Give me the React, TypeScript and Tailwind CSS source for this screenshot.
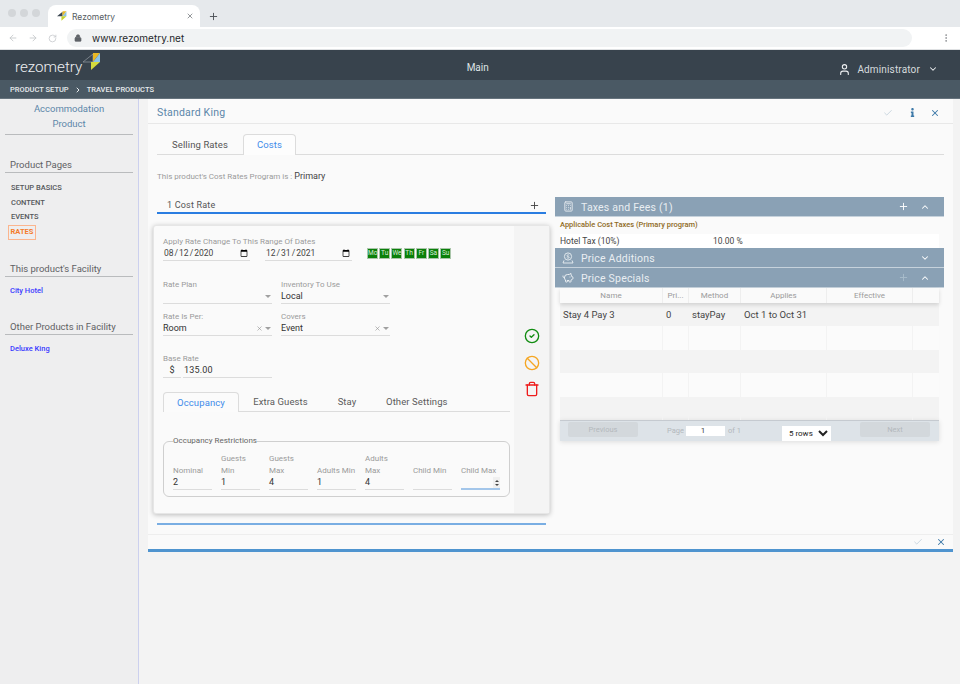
import React from "react";
import { ArrowLeft, ArrowRight, RotateCw, Lock, X, Plus, ChevronDown, ChevronUp, ChevronRight, Check, Calculator, PiggyBank, CircleCheck, Ban, Trash, User, MoreVertical } from "lucide-react";
import { FaInfo } from "react-icons/fa";

function Logo() {
  return (
    <svg width="18" height="17" viewBox="0 0 18 17" className="ml-[1px] -mt-[6px]">
      <path d="M0 9 L10 1 L10 9 Z" fill="none" stroke="#8a9299" strokeWidth="0.8" />
      <path d="M10 0 L17 0 L10 9 Z" fill="#e9b824" />
      <path d="M17 0 L17 9 L10 9 Z" fill="#8cc3e6" />
      <path d="M8 9 L17 9 L8 17 Z" fill="#d6dc3c" />
    </svg>
  );
}

function Favicon() {
  return (
    <svg width="10" height="10" viewBox="0 0 18 17">
      <path d="M0 9 L10 1 L10 9 Z" fill="#3b4650" />
      <path d="M10 0 L17 0 L10 9 Z" fill="#e9b824" />
      <path d="M17 0 L17 9 L10 9 Z" fill="#8cc3e6" />
      <path d="M8 9 L17 9 L8 17 Z" fill="#c4d22e" />
    </svg>
  );
}

function Chrome() {
  return (
    <div className="shrink-0">
      <div className="h-[27px] bg-[#e6e9ec] flex items-end">
        <div className="flex items-center gap-1 pl-[8px] self-center -mt-[1px]">
          <span className="w-2 h-2 rounded-full bg-[#d3d6d9]" />
          <span className="w-2 h-2 rounded-full bg-[#d3d6d9]" />
          <span className="w-2 h-2 rounded-full bg-[#d3d6d9]" />
        </div>
        <div className="ml-2 w-[152px] h-[22px] bg-white rounded-t-lg flex items-center pl-[9px] pr-[6px]">
          <Favicon />
          <span className="ml-[5px] mt-[2px] text-[8.5px] text-[#555b61] flex-1 font-[Inter,sans-serif]">Rezometry</span>
          <X size={8} className="text-[#5f6368]" strokeWidth={2} />
        </div>
        <Plus size={11} className="ml-2 mb-[5px] text-[#4a4f54]" strokeWidth={2} />
      </div>
      <div className="h-[23px] bg-white flex items-center pl-[8px] pr-[9px] border-b border-[#dfe1e3]">
        <ArrowLeft size={10} className="text-[#c3c6c9]" />
        <ArrowRight size={10} className="ml-[10px] text-[#c3c6c9]" />
        <RotateCw size={9} className="ml-[10px] text-[#c3c6c9]" />
        <div className="ml-[10px] flex-1 h-[18px] rounded-full bg-[#f1f3f4] flex items-center pl-[7px]">
          <Lock size={8} className="text-[#5f6368]" fill="#5f6368" />
          <span className="ml-[10px] mt-px text-[10px] text-[#25282b] font-[Inter,sans-serif]">www.rezometry.net</span>
        </div>
        <MoreVertical size={10} className="ml-[29px] text-[#8b8f93]" />
      </div>
    </div>
  );
}

function AppHeader() {
  return (
    <div className="shrink-0">
      <div className="h-[30px] bg-[#38434d] flex items-center pl-[15px] pr-[22px] text-[#eef0f2]">
        <div className="flex items-center w-[120px]">
          <span className="text-[15.2px] font-light leading-none mt-[6px]">rezometry</span>
          <Logo />
        </div>
        <div className="flex-1 text-center text-[10px] text-[#dfe3e6] pr-[18px] mt-[4px]">Main</div>
        <User size={13} className="text-[#eef0f2] mt-[8px]" />
        <span className="ml-[6px] mt-[8px] text-[10px] tracking-[0.15px] text-[#d7dbde]">Administrator</span>
        <ChevronDown size={10} className="ml-[8px] mt-[8px]" strokeWidth={2.5} />
      </div>
      <div className="h-[19px] bg-[#4a5964] border-b border-[#66737d] flex items-center pl-[10px] pt-[2px] text-[7.5px] font-medium text-[#e7eaec]">
        <span>PRODUCT SETUP</span>
        <ChevronRight size={8} className="mx-[5px]" strokeWidth={3} />
        <span>TRAVEL PRODUCTS</span>
      </div>
    </div>
  );
}

function SideHeading({ children }: { children: React.ReactNode }) {
  return <div className="mx-[5px] pl-[5px] border-b border-[#b9bbbd] text-[9.5px] leading-[14px] text-[#5f6164]">{children}</div>;
}

function Sidebar() {
  return (
    <aside className="w-[139px] shrink-0 bg-[#eeeeef] border-r border-[#ccd0ee]">
      <div className="mx-[5px] pt-[2px] pb-[3px] border-b border-[#b9bbbd] text-center text-[9.5px] leading-[15px] text-[#5c86a9] h-[36px]">
        <div>Accommodation</div>
        <div>Product</div>
      </div>
      <div className="mt-[23px]"><SideHeading>Product Pages</SideHeading></div>
      <div className="mt-[8px] pl-[11px] text-[7.5px] font-medium leading-[14.6px] text-[#55585b]">
        <div>SETUP BASICS</div>
        <div>CONTENT</div>
        <div>EVENTS</div>
        <div className="-ml-[3px] w-[28px] h-[15px] flex items-center justify-center border border-[#fbb58e] text-[#f47c2c] font-bold">RATES</div>
      </div>
      <div className="mt-[22px]"><SideHeading>This product's Facility</SideHeading></div>
      <div className="mt-[9px] pl-[10px] text-[7.5px] font-medium leading-[10px] text-[#3a3aff]">City Hotel</div>
      <div className="mt-[24px]"><SideHeading>Other Products in Facility</SideHeading></div>
      <div className="mt-[9px] pl-[10px] text-[7.5px] font-medium leading-[10px] text-[#3a3aff]">Deluxe King</div>
    </aside>
  );
}

function Field({ label, value, clear, className }: { label: string; value?: string; clear?: boolean; className?: string }) {
  return (
    <div className={"w-[109px] " + (className ?? "")}>
      <div className="text-[8px] leading-[11px] text-[#9a9a9a]">{label}</div>
      <div className="h-[14px] flex items-center border-b border-[#dcdcdc] text-[9px] text-[#333]">
        <span className="flex-1">{value}</span>
        {clear && <X size={7} className="text-[#8d8d8d] mr-[2px]" />}
        <span className="mr-[1px] w-0 h-0 border-x-[3px] border-x-transparent border-t-[3px] border-t-[#a0a0a0]" />
      </div>
    </div>
  );
}

function DateInput({ value }: { value: string }) {
  return (
    <input
      type="date"
      defaultValue={value}
      className="w-[87px] h-[15px] border-b border-[#dcdcdc] bg-transparent text-[8.5px] text-[#444] outline-none"
    />
  );
}

const days = ["Mo", "Tu", "We", "Th", "Fr", "Sa", "Su"];

function NumField({ top, label, value, active }: { top?: string; label: string; value?: string; active?: boolean }) {
  return (
    <div className="w-[39px] flex flex-col">
      <div className="text-[8px] leading-[12.2px] text-[#9a9a9a] h-[24.4px] flex flex-col justify-end">
        {top && <div>{top}</div>}
        <div>{label}</div>
      </div>
      <div className={"h-[13px] flex items-center justify-between text-[9px] text-[#333] " + (active ? "border-b-2 border-[#a3c6ea]" : "pb-px border-b border-[#dcdcdc]")}>
        <span>{value}</span>
        {active && (
          <span className="flex flex-col items-center gap-[2px] w-[7px] h-[11px] bg-[#f0f0f0] justify-center">
            <span className="w-0 h-0 border-x-[2px] border-x-transparent border-b-[2px] border-b-[#444]" />
            <span className="w-0 h-0 border-x-[2px] border-x-transparent border-t-[2px] border-t-[#444]" />
          </span>
        )}
      </div>
    </div>
  );
}

function RateCard() {
  return (
    <div className="mt-[11px] -mx-[4px] h-[289px] flex bg-[#fafafa] rounded-[3px] border border-[#e6e6e6] shadow-[0_1px_5px_rgba(0,0,0,0.25)]">
      <div className="flex-1 pl-[9px] pr-[4px] pt-[10px]">
        <div className="text-[8px] leading-[11px] text-[#9a9a9a]">Apply Rate Change To This Range Of Dates</div>
        <div className="flex items-center -mt-px">
          <DateInput value="2020-08-12" />
          <div className="ml-[15px] flex"><DateInput value="2021-12-31" /></div>
          <div className="ml-[15px] flex gap-[1.2px]">
            {days.map((d) => (
              <span key={d} className="w-[11px] h-[11px] bg-[#0a800a] border border-[#a9c5a9] text-[6.5px] leading-[9px] text-center text-[#d9ecd9]">{d}</span>
            ))}
          </div>
        </div>
        <div className="mt-[18px] flex gap-[9px]">
          <Field label="Rate Plan" />
          <Field label="Inventory To Use" value="Local" />
        </div>
        <div className="mt-[7px] flex gap-[9px]">
          <Field label="Rate Is Per:" value="Room" clear />
          <Field label="Covers" value="Event" clear />
        </div>
        <div className="mt-[17px] text-[8px] leading-[11px] text-[#9a9a9a]">Base Rate</div>
        <div className="flex w-[109px] gap-[2px] text-[9px] text-[#333] leading-[13px] h-[14px]">
          <span className="w-[18px] border-b border-[#dcdcdc] text-center">$</span>
          <span className="flex-1 border-b border-[#dcdcdc] pl-[1px] tracking-[0.2px]">135.00</span>
        </div>
        <div className="mt-[14px] flex items-end h-[20px] border-b border-[#dcdcdc] text-[9.5px] text-[#5a5a5a] tracking-[0.1px]">
          <div className="w-[76px] h-[20px] -mb-px pt-[2px] flex items-center justify-center bg-[#fbfbfb] border border-b-0 border-[#dcdcdc] rounded-t-[4px] text-[#3f8bea]">Occupancy</div>
          <div className="w-[83px] h-[19px] pt-[2px] flex items-center justify-center">Extra Guests</div>
          <div className="w-[50px] h-[19px] pt-[2px] flex items-center justify-center">Stay</div>
          <div className="ml-[14px] h-[19px] pt-[2px] flex items-center">Other Settings</div>
        </div>
        <fieldset className="mt-[25px] h-[60px] border border-[#cfcfcf] rounded-[6px] pl-[9px] pr-[9px]">
          <legend className="text-[8px] leading-[8px] text-[#666]">Occupancy Restrictions</legend>
          <div className="flex justify-between mt-[8px]">
            <NumField label="Nominal" value="2" />
            <NumField top="Guests" label="Min" value="1" />
            <NumField top="Guests" label="Max" value="4" />
            <NumField label="Adults Min" value="1" />
            <NumField top="Adults" label="Max" value="4" />
            <NumField label="Child Min" />
            <NumField label="Child Max" active />
          </div>
        </fieldset>
      </div>
      <div className="w-[35px] bg-[#f4f4f4] flex flex-col items-center pt-[102px] gap-[10.5px]">
        <CircleCheck size={16} className="text-[#118c11]" strokeWidth={2} />
        <Ban size={16} className="text-[#f5a623]" strokeWidth={2} />
        <Trash size={16} className="text-[#ee1c1c]" strokeWidth={2} />
      </div>
    </div>
  );
}

function PriceAdditionIcon() {
  return (
    <svg width="12" height="12" viewBox="0 0 12 12" fill="none" stroke="#e9eef2" strokeWidth="0.9">
      <circle cx="6" cy="4.5" r="3.6" />
      <path d="M1 11 L2 8.4 M11 11 L10 8.4 M1 11 H11" />
      <path d="M7.2 3.2 C6.4 2.6 4.9 2.9 5 3.9 C5.1 5 7.2 4.3 7.2 5.4 C7.2 6.3 5.6 6.4 4.8 5.7" />
    </svg>
  );
}

function Bar({ icon, title, plus, up, faded }: { icon: React.ReactNode; title: string; plus?: boolean; up?: boolean; faded?: boolean }) {
  return (
    <div className="h-[20px] bg-[#8aa1b5] border-b border-[#c6d2dc] flex items-center pl-[7px] pr-[14px] text-[#e9eef2]">
      <span className="w-[12px] flex justify-center">{icon}</span>
      <span className="ml-[7px] pt-[2px] flex-1 text-[10.5px] tracking-[0.2px]">{title}</span>
      {plus && <Plus size={11} className={"mr-[11px] " + (faded ? "text-[#a9bccb]" : "text-white")} />}
      {up ? <ChevronUp size={10} className="text-white" strokeWidth={2.5} /> : <ChevronDown size={10} className="text-white" strokeWidth={2.5} />}
    </div>
  );
}

const colW = ["w-[103px]", "w-[26px]", "w-[52px]", "w-[86px]", "w-[86px]", "flex-1"];

function TableRow({ shade, cells }: { shade: boolean; cells?: string[] }) {
  return (
    <div className={"h-[23.4px] flex text-[9.5px] text-[#444] " + (shade ? "bg-[#f3f3f3]" : "bg-[#fbfbfb]")}>
      {colW.map((w, i) => (
        <div key={i} className={w + " flex items-center px-[3px] border-r border-[#f3f3f3] last:border-r-0"}>{cells?.[i]}</div>
      ))}
    </div>
  );
}

function RightPanel() {
  const heads = ["Name", "Pri...", "Method", "Applies", "Effective", ""];
  return (
    <div className="w-[389px] shrink-0">
      <Bar icon={<Calculator size={11} />} title="Taxes and Fees (1)" plus up />
      <div className="pl-[5px] text-[7.5px] leading-[14px] pt-px font-medium text-[#8f6a25]">Applicable Cost Taxes (Primary program)</div>
      <div className="mx-[5px] mt-[2px] h-[14px] bg-white flex items-center text-[8.5px] text-[#444]">
        <span className="w-[153px]">Hotel Tax (10%)</span>
        <span>10.00 %</span>
      </div>
      <Bar icon={<PriceAdditionIcon />} title="Price Additions" />
      <Bar icon={<PiggyBank size={12} />} title="Price Specials" plus up faded />
      <div className="mx-[5px]">
        <div className="h-[15px] flex text-[8px] text-[#9a9a9a] text-center shadow-[0_2px_4px_rgba(0,0,0,0.14)] relative">
          {heads.map((h, i) => (
            <div key={i} className={colW[i] + " flex items-center justify-center border-r border-[#eeeeee] last:border-r-0"}>{h}</div>
          ))}
        </div>
        <TableRow shade cells={["Stay 4 Pay 3", "0", "stayPay", "Oct 1 to Oct 31"]} />
        <TableRow shade={false} />
        <TableRow shade />
        <TableRow shade={false} />
        <TableRow shade />
        <div className="h-[21px] bg-[#dde3e8] flex items-center border-t border-[#c5cad0] shadow-[0_1px_5px_rgba(0,0,0,0.12)] pl-[8px] pr-[9px] text-[7.5px] text-[#b3b8bd]">
          <div className="w-[70px] h-[15px] -mt-[3px] rounded-[2px] bg-[#d3d8dc] flex items-center justify-center">Previous</div>
          <span className="ml-[29px]">Page</span>
          <div className="ml-[2px] w-[39px] h-[10px] bg-white text-[8px] text-[#444] text-center leading-[10px] pr-[5px]">1</div>
          <span className="ml-[3px]">of 1</span>
          <select className="ml-[41px] w-[49px] h-[15px] bg-white text-[8px] text-[#222] pl-[3px] outline-none self-end" defaultValue="5 rows">
            <option>5 rows</option>
          </select>
          <div className="ml-auto w-[70px] h-[15px] -mt-[3px] rounded-[2px] bg-[#d3d8dc] flex items-center justify-center">Next</div>
        </div>
      </div>
    </div>
  );
}

function Main() {
  return (
    <div className="flex-1 min-w-0 bg-[#f3f3f3] pl-[9px] pr-[7px]">
      <div className="bg-[#fafafa] border-b-[3px] border-[#4f94cf]">
        <div className="h-[25px] flex items-center border-b border-[#e8e8e8] pl-[9px] pr-[13px] pt-[3px]">
          <span className="flex-1 text-[10.5px] tracking-[0.2px] text-[#5c86a9]">Standard King</span>
          <Check size={10} className="text-[#c3d1db]" />
          <FaInfo size={9} className="ml-[15px] text-[#3d79a8]" />
          <X size={10} className="ml-[13px] text-[#3d79a8]" strokeWidth={2.5} />
        </div>
        <div className="mx-[9px] mt-[10px] h-[21px] flex items-end border-b border-[#dcdcdc] text-[9.5px] tracking-[0.1px] text-[#555]">
          <div className="w-[86px] h-[20px] pt-[3px] flex items-center justify-center">Selling Rates</div>
          <div className="w-[53px] h-[21px] -mb-px pt-px flex items-center justify-center bg-[#fdfdfd] border border-b-0 border-[#dcdcdc] rounded-t-[4px] text-[#3f8bea]">Costs</div>
        </div>
        <div className="mx-[9px] mt-[16px] h-[12px] flex items-center text-[8px] text-[#9a9a9a]">
          This product's Cost Rates Program is :<span className="ml-[2px] text-[9px] text-[#444]">Primary</span>
        </div>
        <div className="mt-[14px] mx-[9px] flex gap-[9px] items-start">
          <div className="w-[389px] shrink-0">
            <div className="h-[17px] flex items-center justify-between border-b-2 border-[#2a7de1] pl-[10px] pr-[6px] pt-[2px] text-[9px] tracking-[0.2px] text-[#555]">
              <span>1 Cost Rate</span>
              <Plus size={11} className="text-[#444]" />
            </div>
            <RateCard />
            <div className="mt-[9px] h-[2px] bg-[#7aaee3]" />
          </div>
          <RightPanel />
        </div>
        <div className="mt-[9px] h-[15px] border-t border-[#eeeeee] flex items-center justify-end pr-[7px]">
          <Check size={10} className="text-[#c3d1db]" />
          <X size={10} className="ml-[13px] text-[#3d79a8]" strokeWidth={2.5} />
        </div>
      </div>
    </div>
  );
}

export default function App() {
  return (
    <div className="w-[960px] h-[684px] overflow-hidden flex flex-col bg-[#f3f3f3] font-[Roboto,sans-serif]">
      <Chrome />
      <AppHeader />
      <div className="flex-1 flex min-h-0">
        <Sidebar />
        <Main />
      </div>
    </div>
  );
}
